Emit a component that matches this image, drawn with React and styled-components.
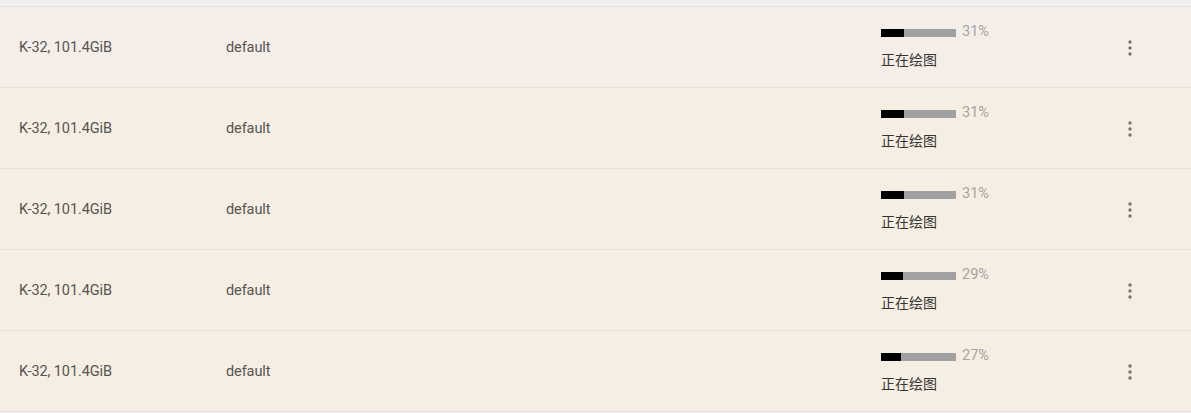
import React from "react";
import styled, { createGlobalStyle } from "styled-components";

const Global = createGlobalStyle`
  html, body { margin: 0; padding: 0; background: #f2f2f2; }
  body { font-family: Roboto, "Noto Sans CJK SC", sans-serif; }
`;

const Page = styled.div`
  width: 1191px;
  height: 413px;
  background: #f0f0f0;
  padding-top: 6px;
  box-sizing: border-box;
`;

const Table = styled.div`
  border-top: 1px solid #e2e2e2;
  display: flex;
  flex-direction: column;
`;

const Row = styled.div`
  display: grid;
  grid-template-columns: 207px 1fr 237px 24px;
  align-items: center;
  height: 80px;
  padding: 0 49px 0 19px;
  background: ${(p) => (p.$first ? "#f5eee8" : "#f6eee2")};
  border-bottom: 1px solid #e3e0da;
`;

const Cell = styled.div`
  font-size: 14.5px;
  color: #555;
  letter-spacing: -0.1px;
`;

const Status = styled.div`
  display: flex;
  flex-direction: column;
  gap: 9px;
  margin-top: -2px;
`;

const ProgressLine = styled.div`
  display: flex;
  align-items: flex-start;
  gap: 6px;
`;

const Bar = styled.div`
  width: 75px;
  height: 8px;
  margin-top: 6px;
  background: #a1a1a1;
  overflow: hidden;
`;

const Fill = styled.div`
  height: 100%;
  background: #000;
`;

const Pct = styled.span`
  font-size: 14.5px;
  line-height: 17px;
  color: #a3a3a3;
`;

const Label = styled.div`
  font-family: "Noto Sans CJK SC", sans-serif;
  font-size: 14px;
  line-height: 20px;
  color: #333;
`;

const Menu = styled.button`
  width: 24px;
  height: 24px;
  padding: 0;
  border: 0;
  background: transparent;
  display: flex;
  align-items: center;
  justify-content: center;
  margin-top: 1px;
`;

const data = [31, 31, 31, 29, 27];

export default function App() {
  return (
    <>
      <Global />
      <Page>
        <Table>
          {data.map((p, i) => (
            <Row key={i} $first={i === 0}>
              <Cell>K-32, 101.4GiB</Cell>
              <Cell>default</Cell>
              <Status>
                <ProgressLine>
                  <Bar>
                    <Fill style={{ width: `${p}%` }} />
                  </Bar>
                  <Pct>{p}%</Pct>
                </ProgressLine>
                <Label>正在绘图</Label>
              </Status>
              <Menu aria-label="more">
                <svg width="24" height="24" viewBox="0 0 24 24">
                  <circle cx="12" cy="6" r="1.7" fill="#747474" />
                  <circle cx="12" cy="12" r="1.7" fill="#747474" />
                  <circle cx="12" cy="18" r="1.7" fill="#747474" />
                </svg>
              </Menu>
            </Row>
          ))}
        </Table>
      </Page>
    </>
  );
}
